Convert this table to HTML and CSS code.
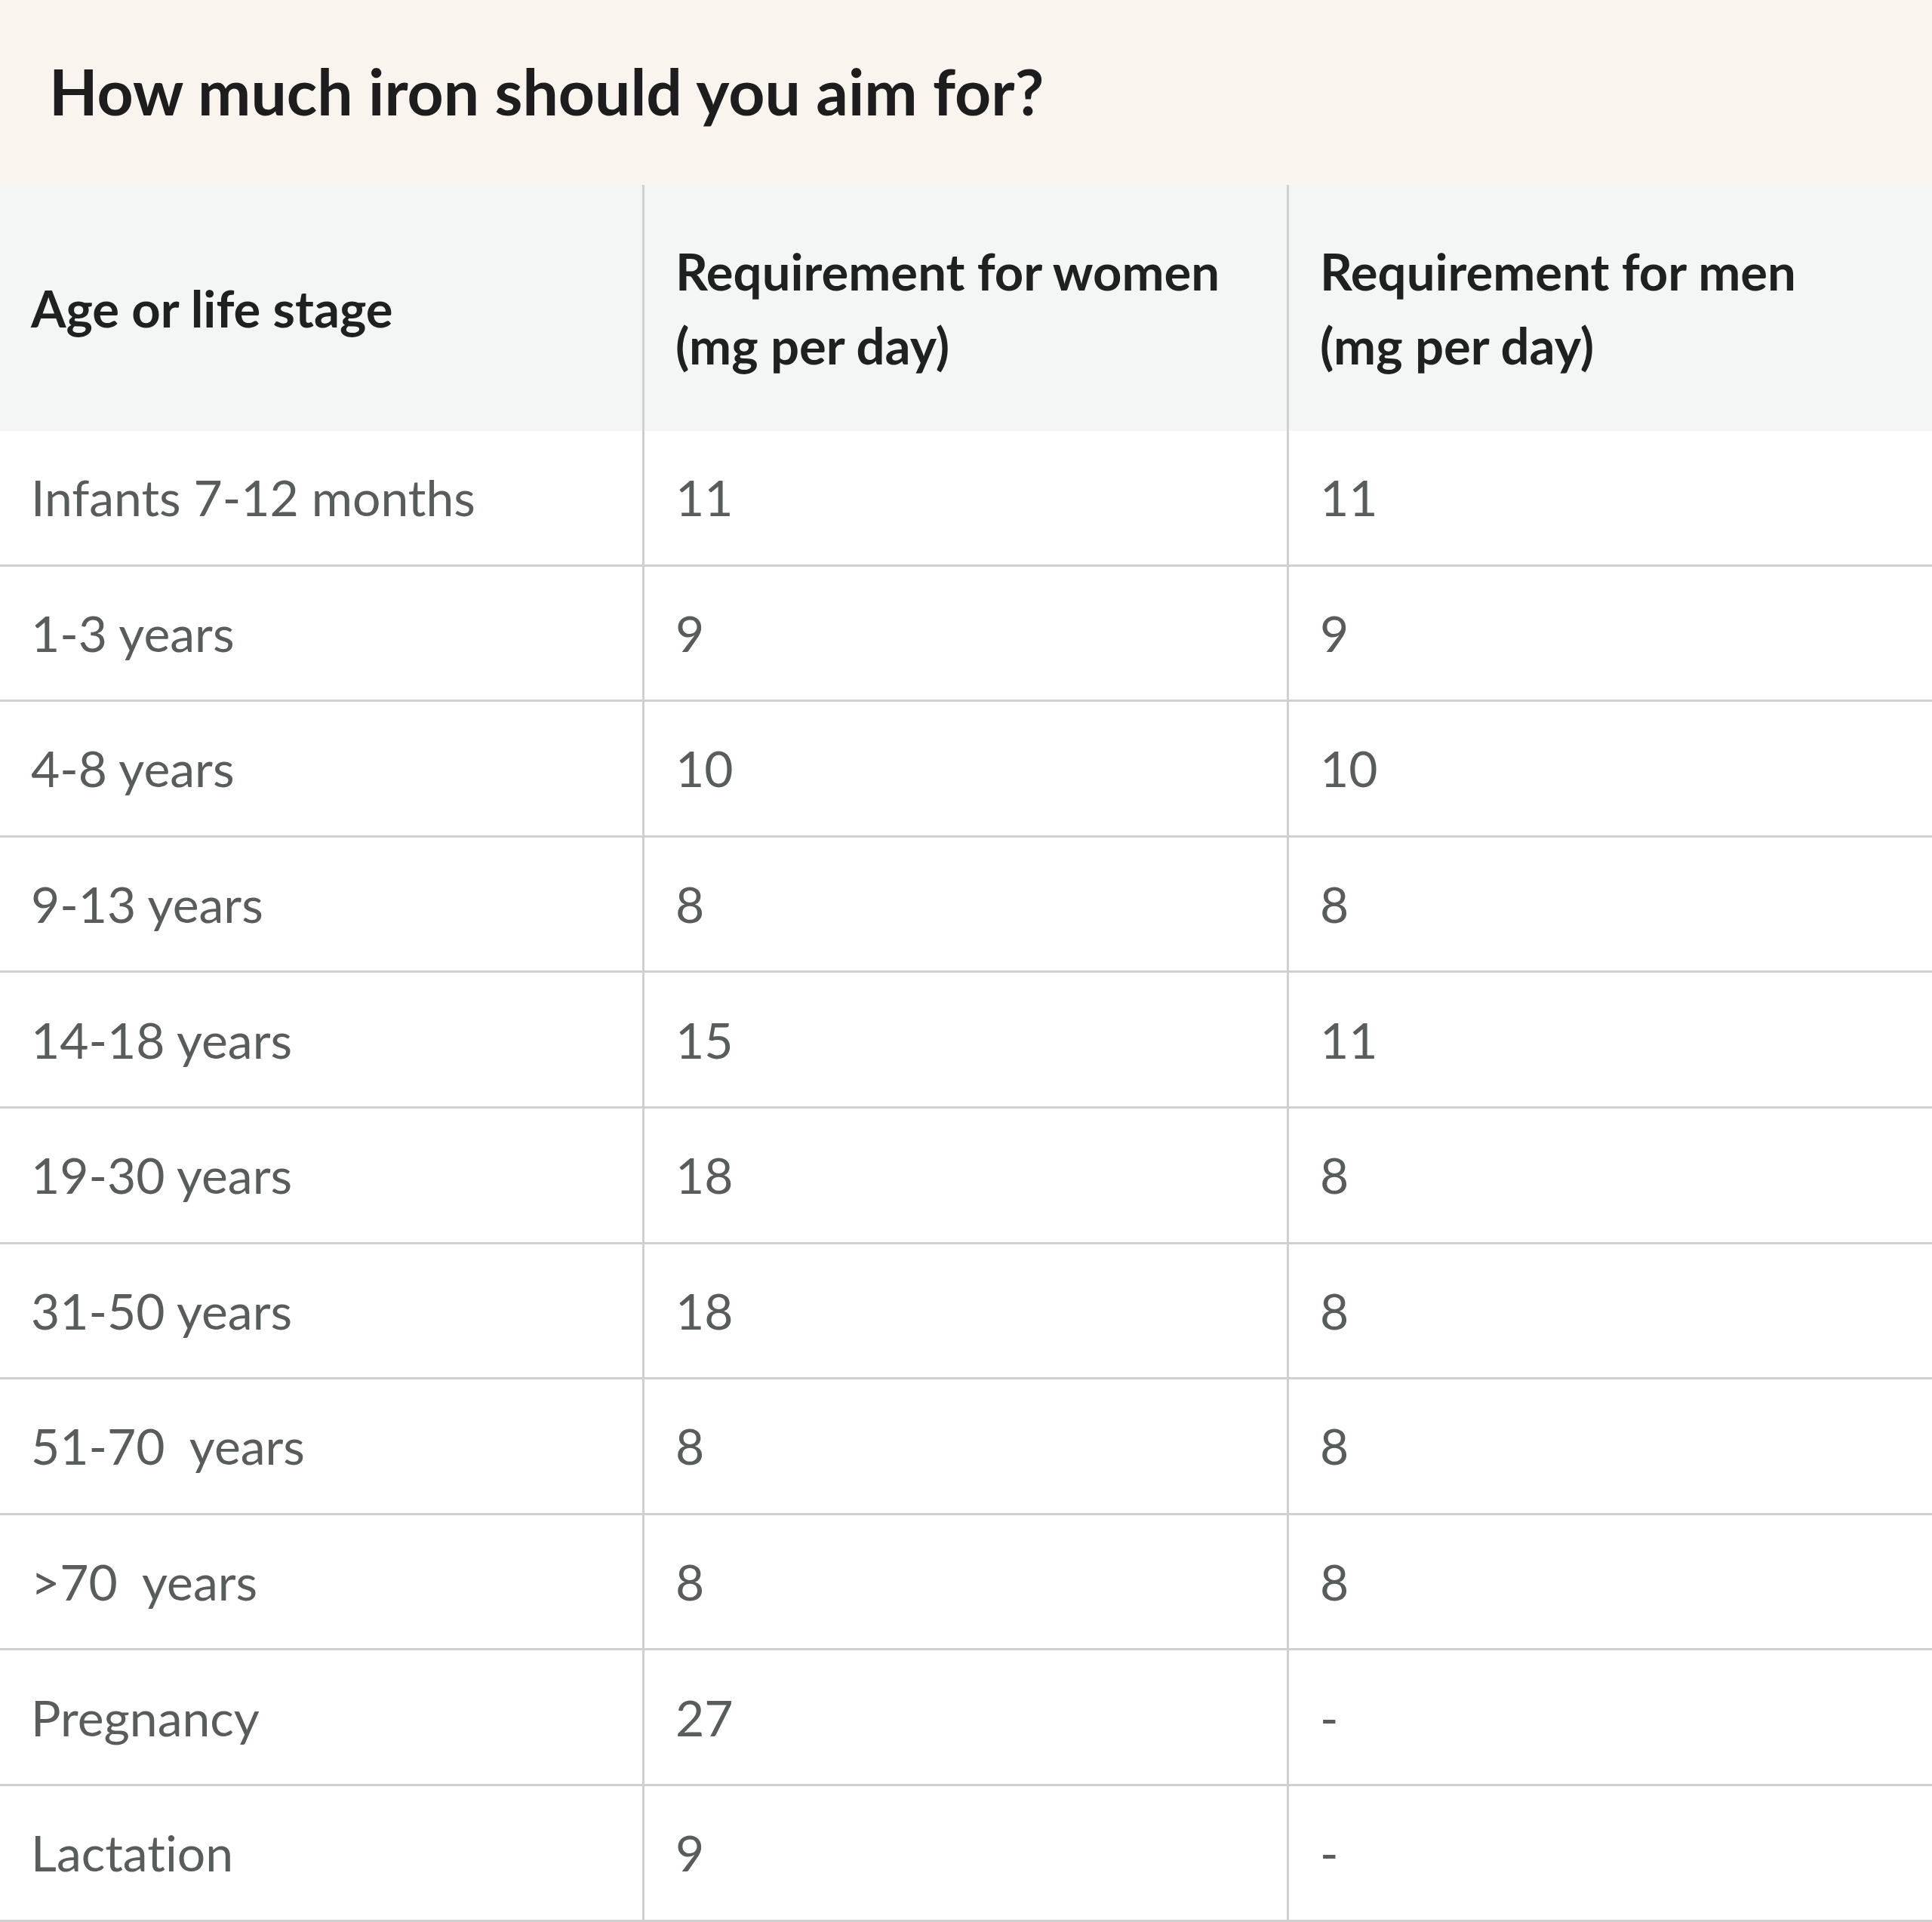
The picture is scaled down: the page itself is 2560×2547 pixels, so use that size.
FILE: index.html
```html
<!DOCTYPE html>
<html lang="en">
<head>
<meta charset="utf-8">
<title>How much iron should you aim for?</title>
<link rel="stylesheet" href="styles.css">
</head>
<body>
<section class="card">
  <h2 class="title">How much iron should you aim for?</h2>
  <div class="table" role="table">
    <div class="row head" role="row">
      <div class="cell" role="columnheader">Age or life stage</div>
      <div class="cell" role="columnheader">Requirement for women<br>(mg per day)</div>
      <div class="cell" role="columnheader">Requirement for men<br>(mg per day)</div>
    </div>
    <div class="row" role="row"><div class="cell">Infants 7-12 months</div><div class="cell">11</div><div class="cell">11</div></div>
    <div class="row" role="row"><div class="cell">1-3 years</div><div class="cell">9</div><div class="cell">9</div></div>
    <div class="row" role="row"><div class="cell">4-8 years</div><div class="cell">10</div><div class="cell">10</div></div>
    <div class="row" role="row"><div class="cell">9-13 years</div><div class="cell">8</div><div class="cell">8</div></div>
    <div class="row" role="row"><div class="cell">14-18 years</div><div class="cell">15</div><div class="cell">11</div></div>
    <div class="row" role="row"><div class="cell">19-30 years</div><div class="cell">18</div><div class="cell">8</div></div>
    <div class="row" role="row"><div class="cell">31-50 years</div><div class="cell">18</div><div class="cell">8</div></div>
    <div class="row" role="row"><div class="cell">51-70&nbsp; years</div><div class="cell">8</div><div class="cell">8</div></div>
    <div class="row" role="row"><div class="cell">&gt;70&nbsp; years</div><div class="cell">8</div><div class="cell">8</div></div>
    <div class="row" role="row"><div class="cell">Pregnancy</div><div class="cell">27</div><div class="cell">-</div></div>
    <div class="row" role="row"><div class="cell">Lactation</div><div class="cell">9</div><div class="cell">-</div></div>
  </div>
</section>
</body>
</html>
```

FILE: styles.css
```css
* { box-sizing: border-box; }
html, body { margin: 0; padding: 0; background: #ffffff; }
body {
  width: 2560px;
  font-family: "Lato", "Liberation Sans", sans-serif;
  font-variant-ligatures: none;
}
.card { width: 2560px; }
.title {
  margin: 0;
  height: 245px;
  padding: 0 0 4px 65px;
  display: flex;
  align-items: center;
  background: #f9f5ee;
  color: #1d1d1d;
  font-size: 84px;
  font-weight: 700;
  letter-spacing: 0;
}
.table { display: flex; flex-direction: column; }
.row {
  display: grid;
  grid-template-columns: 851px 854px 1fr;
  height: 179.6px;
  border-bottom: 3px solid #d0d0d0;
}
.row.head {
  height: 326px;
  border-bottom: none;
  background: #f4f6f5;
}
.cell {
  display: flex;
  align-items: center;
  padding: 0 40px 0 41px;
  color: #585c5a;
  font-size: 66px;
  font-weight: 400;
  line-height: 98px;
}
.cell + .cell { border-left: 3px solid #d0d0d0; }
.head .cell {
  color: #1f2020;
  font-size: 67px;
  font-weight: 700;
}
```
